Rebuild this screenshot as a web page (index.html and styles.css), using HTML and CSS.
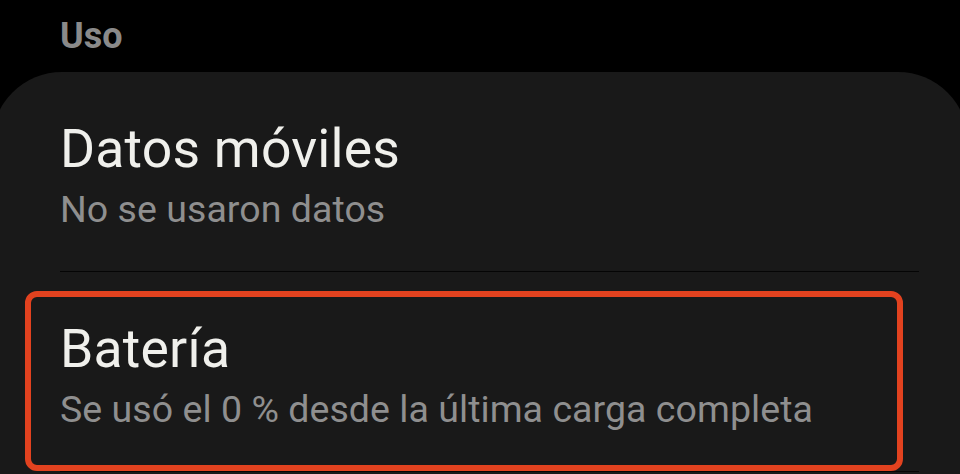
FILE: index.html
```html
<!DOCTYPE html>
<html lang="es">

<head>
  <meta charset="UTF-8" />
  <meta name="viewport" content="width=device-width, initial-scale=1.0" />
  <title>Uso</title>
  <link rel="stylesheet" href="styles.css">
</head>

<body>
  <div class="section-title">Uso</div>

  <div class="card">
    <div class="item">
      <div class="item-title">Datos móviles</div>
      <div class="item-summary">No se usaron datos</div>
    </div>

    <div class="item">
      <div class="highlight"></div>
      <div class="item-title">Batería</div>
      <div class="item-summary">Se usó el 0 % desde la última carga completa</div>
    </div>
  </div>
</body>

</html>
```

FILE: styles.css
```css
* {
  box-sizing: border-box;
}

html,
body {
  margin: 0;
  padding: 0;
  background-color: #000;
  overflow: hidden;
}

body {
  font-family: Roboto, 'Noto Sans', sans-serif;
  height: 474px;
}

.section-title {
  height: 72px;
  line-height: 72px;
  padding-left: 60px;
  font-size: 36px;
  font-weight: bold;
  color: #8a8a8a;
}

.card {
  margin: 0 -8px;
  padding: 0 49px 0 68px;
  background-color: #191919;
  border-radius: 70px 70px 0 0;
  min-height: 420px;
}

.item {
  position: relative;
  padding: 46px 0 39px 0;
  border-bottom: 1px solid #050505;
}

.item-title {
  font-size: 53.5px;
  line-height: 62px;
  letter-spacing: 0.2px;
  color: #f0f0ec;
}

.item-summary {
  margin-top: 6px;
  font-size: 37.5px;
  line-height: 46px;
  letter-spacing: 0.05px;
  color: #8f8f8f;
}

/* red annotation around the battery row */
.highlight {
  position: absolute;
  left: -35px;
  top: 19px;
  width: 878px;
  height: 180px;
  border: 6px solid #e2421f;
  border-radius: 12px;
}
```
